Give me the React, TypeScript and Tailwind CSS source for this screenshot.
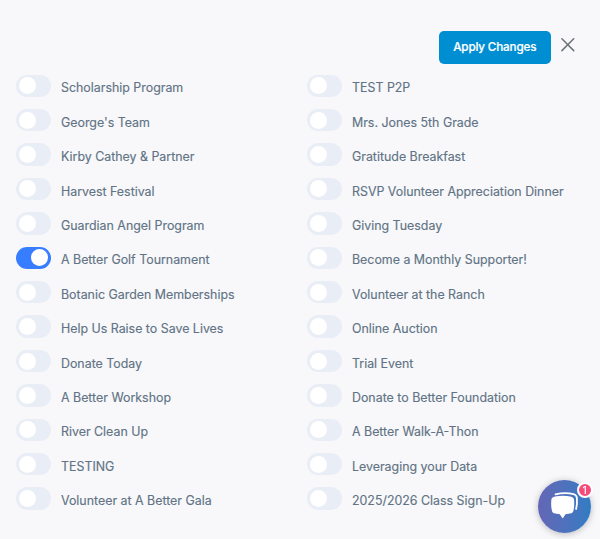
import React, { useState } from "react";

const leftColumn = [
  "Scholarship Program",
  "George's Team",
  "Kirby Cathey & Partner",
  "Harvest Festival",
  "Guardian Angel Program",
  "A Better Golf Tournament",
  "Botanic Garden Memberships",
  "Help Us Raise to Save Lives",
  "Donate Today",
  "A Better Workshop",
  "River Clean Up",
  "TESTING",
  "Volunteer at A Better Gala",
];

const rightColumn = [
  "TEST P2P",
  "Mrs. Jones 5th Grade",
  "Gratitude Breakfast",
  "RSVP Volunteer Appreciation Dinner",
  "Giving Tuesday",
  "Become a Monthly Supporter!",
  "Volunteer at the Ranch",
  "Online Auction",
  "Trial Event",
  "Donate to Better Foundation",
  "A Better Walk-A-Thon",
  "Leveraging your Data",
  "2025/2026 Class Sign-Up",
];

interface ToggleRowProps {
  label: string;
  checked: boolean;
  onToggle: () => void;
}

function ToggleRow({ label, checked, onToggle }: ToggleRowProps) {
  return (
    <div className="flex h-[34.42px] items-start">
      <button
        type="button"
        role="switch"
        aria-checked={checked}
        aria-label={label}
        onClick={onToggle}
        className={`flex h-[22.5px] w-[35px] shrink-0 items-center rounded-full pr-[3px] pl-[2.5px] ${
          checked ? "justify-end bg-[#377dff]" : "justify-start bg-[#e9edf5]"
        }`}
      >
        <span className="h-[17px] w-[17px] rounded-full bg-white" />
      </button>
      <span className="ml-[10px] pt-[3.8px] text-[12.4px] leading-5 whitespace-nowrap text-[#617384] [-webkit-text-stroke:0.15px_#617384]">
        {label}
      </span>
    </div>
  );
}

function ChatButton() {
  return (
    <button
      type="button"
      aria-label="Open chat"
      className="fixed top-[480px] left-[538px] h-[53px] w-[53px] rounded-full bg-linear-to-r from-[#6366b5] to-[#2f7cc4] shadow-[0_1px_7px_rgba(0,0,0,0.25)]"
    >
      <svg viewBox="0 0 53 53" className="h-full w-full" fill="none">
        <path
          d="M17.5 14.3C23.5 12.9 30.5 12.9 35.5 14.1C37.8 14.7 38.7 15.8 38.9 18C39.2 22 39 25.5 38.1 29"
          stroke="white"
          strokeWidth="1.8"
          strokeLinecap="round"
        />
        <path
          d="M17 16.4C22 15.6 28 15.6 32.3 16.4C34.8 16.8 35.9 18 36.1 20.2C36.4 24 36.2 27 35.6 30C35.2 32.3 34.3 33.2 32 33.6L27.5 34.2L24.7 38.5L21.8 34.2L17.3 33.6C15 33.2 14.1 32.3 13.8 30C13.2 27 13 24 13.3 20.2C13.5 18 14.5 16.8 17 16.4Z"
          fill="white"
        />
      </svg>
      <span className="absolute top-[1.5px] right-[-1.5px] flex h-4 w-4 items-center justify-center rounded-full border-2 border-white bg-[#f64a7b] text-[10px] leading-none font-medium text-white">
        1
      </span>
    </button>
  );
}

function App() {
  const [enabled, setEnabled] = useState<string[]>(["A Better Golf Tournament"]);

  const handleToggle = (label: string) => {
    setEnabled(prev => (prev.includes(label) ? prev.filter(item => item !== label) : [...prev, label]));
  };

  return (
    <div className="h-[539px] w-[600px] overflow-hidden bg-[#f8f8fb] font-['Inter',sans-serif]">
      <div className="flex items-start justify-end pt-[31px] pr-[25px]">
        <button
          type="button"
          className="h-[33px] w-[112.5px] rounded-[5px] bg-[#008ed3] text-[11.7px] font-medium tracking-[-0.17px] whitespace-nowrap text-white [-webkit-text-stroke:0.2px_white]"
        >
          Apply Changes
        </button>
        <button type="button" aria-label="Close" className="mt-[7px] ml-[10px]">
          <svg viewBox="0 0 14 14" className="h-[14px] w-[14px]" stroke="#6f7478" strokeWidth="1.5" strokeLinecap="round">
            <path d="M0.9 0.8L12.7 12.6M12.7 0.8L0.9 12.6" />
          </svg>
        </button>
      </div>
      <div className="grid grid-cols-[291px_1fr] pt-[10.5px] pl-4">
        {[leftColumn, rightColumn].map((column, index) => (
          <div key={index}>
            {column.map((label) => (
              <ToggleRow
                key={label}
                label={label}
                checked={enabled.includes(label)}
                onToggle={() => handleToggle(label)}
              />
            ))}
          </div>
        ))}
      </div>
      <ChatButton />
    </div>
  );
}

export default App;
